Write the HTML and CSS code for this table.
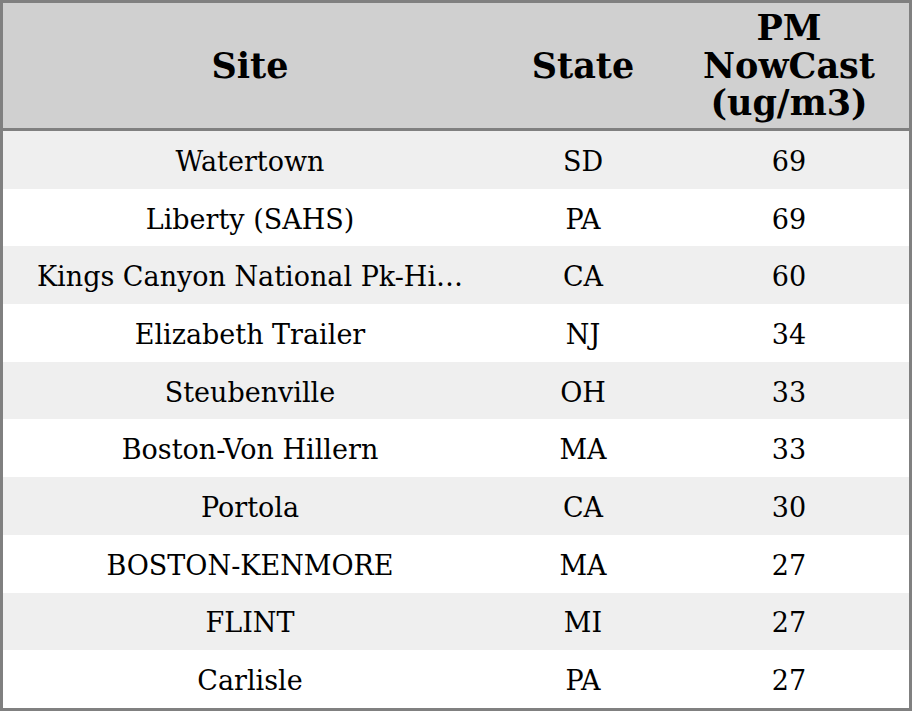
FILE: index.html
```html
<!DOCTYPE html>
<html>
<head>
<meta charset="utf-8">
<link rel="stylesheet" href="styles.css">
</head>
<body>
<table class="grid">
  <colgroup>
    <col class="c-site">
    <col class="c-state">
    <col class="c-pm">
  </colgroup>
  <thead>
    <tr class="head">
      <th>Site</th>
      <th>State</th>
      <th>PM<br>NowCast<br>(ug/m3)</th>
    </tr>
  </thead>
  <tbody>
    <tr><td><div class="clip">Watertown</div></td><td>SD</td><td>69</td></tr>
    <tr><td><div class="clip">Liberty (SAHS)</div></td><td>PA</td><td>69</td></tr>
    <tr><td><div class="clip">Kings Canyon National Pk-Hi…</div></td><td>CA</td><td>60</td></tr>
    <tr><td><div class="clip">Elizabeth Trailer</div></td><td>NJ</td><td>34</td></tr>
    <tr><td><div class="clip">Steubenville</div></td><td>OH</td><td>33</td></tr>
    <tr><td><div class="clip">Boston-Von Hillern</div></td><td>MA</td><td>33</td></tr>
    <tr><td><div class="clip">Portola</div></td><td>CA</td><td>30</td></tr>
    <tr><td><div class="clip">BOSTON-KENMORE</div></td><td>MA</td><td>27</td></tr>
    <tr><td><div class="clip">FLINT</div></td><td>MI</td><td>27</td></tr>
    <tr><td><div class="clip">Carlisle</div></td><td>PA</td><td>27</td></tr>
  </tbody>
</table>
</body>
</html>
```
FILE: styles.css
```css
html, body {
  margin: 0;
  padding: 0;
  background: #ffffff;
}
.grid {
  width: 912px;
  height: 711px;
  border-collapse: separate;
  border-spacing: 0;
  border: 3px solid #808080;
  table-layout: fixed;
  font-family: "DejaVu Serif", serif;
  color: #000;
}
.c-site { width: 494px; }
.c-state { width: 172px; }
.c-pm { width: 240px; }
.head th {
  background: #d0d0d0;
  height: 125px;
  border-bottom: 3px solid #808080;
  font-size: 35px;
  line-height: 37.5px;
  font-weight: bold;
  text-align: center;
  padding: 0;
}
tbody tr {
  height: 57.7px;
}
tbody tr:nth-child(odd) td {
  background: #efefef;
}
tbody td {
  font-size: 27px;
  text-align: center;
  padding: 3px 0 0 0;
  white-space: nowrap;
}
.clip {
  padding: 0 30px;
  overflow: hidden;
  text-overflow: ellipsis;
  white-space: nowrap;
}
```
